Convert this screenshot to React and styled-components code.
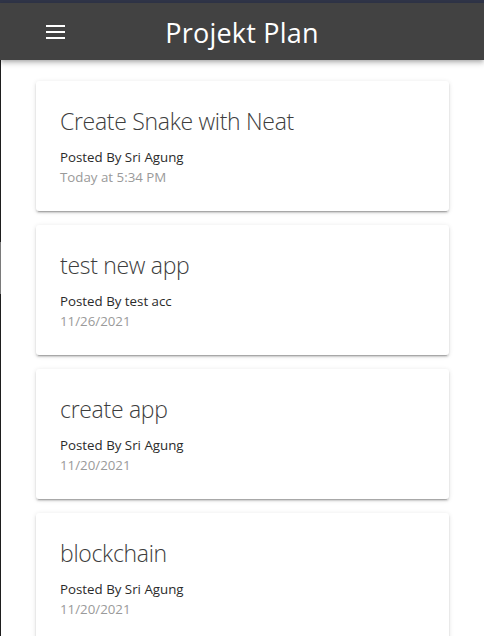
import React from 'react';
import styled, { createGlobalStyle } from 'styled-components';

const GlobalStyle = createGlobalStyle`
  html, body {
    margin: 0;
    padding: 0;
  }

  body {
    background: #fff;
    font-family: "Open Sans", "Noto Sans", sans-serif;
    overflow: hidden;
  }
`;

const Page = styled.div`
  min-height: 636px;
  background:
    linear-gradient(to bottom, transparent 0 60px, #1e1e1e 60px 242px, #7a7a7a 242px 294px, #1e1e1e 294px) no-repeat 0 0 / 1px 100%;
`;

const TopStrip = styled.div`
  height: 3px;
  background: #2f3447;
`;

const Header = styled.header`
  position: relative;
  z-index: 1;
  height: 57px;
  display: flex;
  align-items: center;
  justify-content: center;
  background: #424242;
  box-shadow: 0 2px 4px -1px rgba(0, 0, 0, 0.25), 0 4px 5px 0 rgba(0, 0, 0, 0.14);
`;

const MenuButton = styled.button`
  position: absolute;
  left: 46px;
  top: 22px;
  width: 19px;
  height: 14px;
  padding: 0;
  border: 0;
  background: none;
  display: flex;
  flex-direction: column;
  justify-content: space-between;
  cursor: pointer;

  span {
    display: block;
    height: 2px;
    background: #fff;
  }
`;

const Title = styled.h1`
  margin: 2px 0 0 0;
  color: #fff;
  font-size: 27px;
  font-weight: 400;
  letter-spacing: 0.2px;
`;

const List = styled.main`
  display: flex;
  flex-direction: column;
  gap: 14px;
  padding: 21px 35px 0 36px;
`;

const Card = styled.article`
  display: flex;
  flex-direction: column;
  padding: 25px 24px 24px;
  background: #fff;
  border-radius: 3px;
  box-shadow: 0 3px 1px -2px rgba(0, 0, 0, 0.2), 0 2px 2px 0 rgba(0, 0, 0, 0.14), 0 1px 5px 0 rgba(0, 0, 0, 0.12);
`;

const CardTitle = styled.h2`
  margin: 0 0 11px;
  font-size: 23px;
  line-height: 30px;
  font-weight: 300;
  color: #3d3d3d;
  letter-spacing: -0.3px;
`;

const Meta = styled.div`
  font-size: 13.3px;
  line-height: 20px;
  color: ${(p) => (p.muted ? '#9a9a9a' : '#2b2b2b')};
`;

const projects = [
  { title: 'Create Snake with Neat', author: 'Sri Agung', date: 'Today at 5:34 PM' },
  { title: 'test new app', author: 'test acc', date: '11/26/2021' },
  { title: 'create app', author: 'Sri Agung', date: '11/20/2021' },
  { title: 'blockchain', author: 'Sri Agung', date: '11/20/2021' },
];

const App = () => {
  return (
    <Page>
      <GlobalStyle />
      <TopStrip />
      <Header>
        <MenuButton aria-label="menu">
          <span />
          <span />
          <span />
        </MenuButton>
        <Title>Projekt Plan</Title>
      </Header>
      <List>
        {projects.map((p, i) => (
          <Card key={i}>
            <CardTitle>{p.title}</CardTitle>
            <Meta>Posted By {p.author}</Meta>
            <Meta muted>{p.date}</Meta>
          </Card>
        ))}
      </List>
    </Page>
  );
};

export default App;
